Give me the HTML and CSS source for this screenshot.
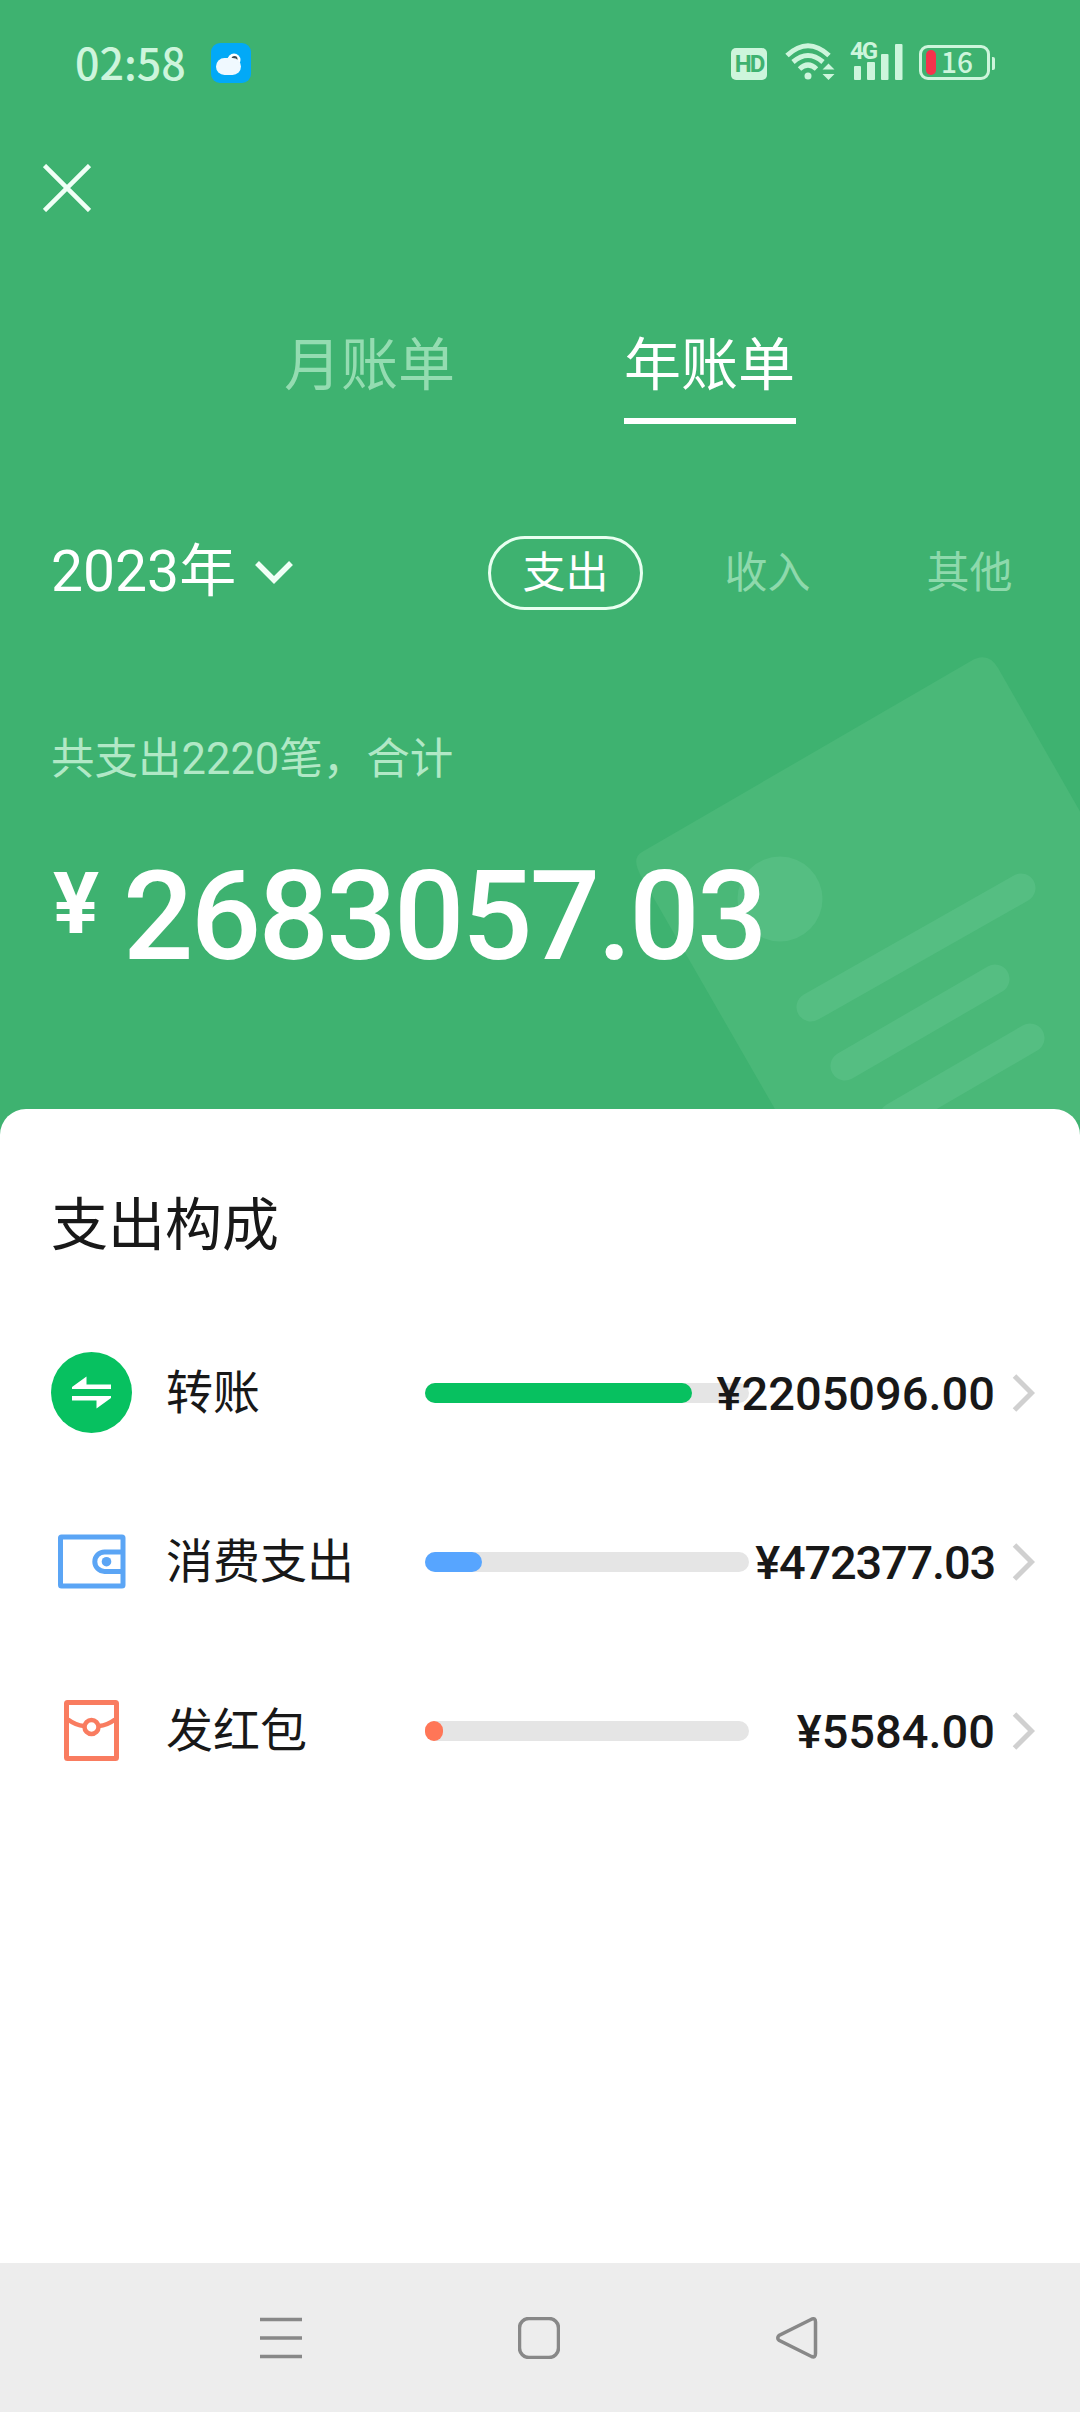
FILE: index.html
```html
<!DOCTYPE html>
<html lang="zh-CN">
<head>
    <meta charset="UTF-8">
    <meta name="viewport" content="width=device-width, initial-scale=1.0">
    <title>年账单</title>
    <link rel="stylesheet" href="styles.css">
</head>
<body>
    <header class="hero">
        <svg class="hero-card" width="480" height="480" viewBox="600 640 480 480">
            <path class="card-bg" d="M971 661 Q988 651 998 668 L1090 829 V1130 H787 L641 876 Q631 858 642 852 Z"/>
            <circle class="card-mark" cx="780" cy="899" r="42.5"/>
            <path class="card-line" d="M811 1007 L1021 888 M845 1066 L995 979 M894 1117 L1030 1038"/>
        </svg>

        <div class="status-bar">
            <span class="time">02:58</span>
            <svg class="weather" width="40" height="40" viewBox="0 0 40 40">
                <rect width="40" height="40" rx="9" fill="#02a9f7"/>
                <circle cx="23" cy="17" r="6.5" fill="#fff"/>
                <circle cx="23.5" cy="16" r="3" fill="#3d4a50"/>
                <rect x="5" y="15" width="25" height="17" rx="8.5" fill="#f0f9ff"/>
            </svg>
            <div class="status-icons">
                <span class="hd">HD</span>
                <svg class="wifi" width="50" height="40" viewBox="0 0 50 40" fill="none" stroke="#cdf5dc" stroke-width="5">
                    <path d="M2 14.5 Q23 -5 44 14.5"/>
                    <path d="M8 21 Q23 8 38 21"/>
                    <path d="M14.500 28 Q23 20 31.500 28"/>
                    <circle cx="23" cy="35" r="3.5" fill="#cdf5dc" stroke="none"/>
                    <path d="M37.500 28.500 L43.500 22.500 L49.500 28.500 Z M37.500 33 L43.500 39 L49.500 33 Z" fill="#cdf5dc" stroke="none"/>
                </svg>
                <div class="signal">
                    <span class="net">4G</span>
                    <svg width="49" height="36" viewBox="0 0 49 36" fill="#cdf5dc">
                        <rect x="0" y="22" width="7" height="14" rx="1"/>
                        <rect x="13" y="18" width="8" height="18" rx="1"/>
                        <rect x="27" y="10" width="7.500" height="26" rx="1"/>
                        <rect x="41" y="0" width="7.500" height="36" rx="1"/>
                    </svg>
                </div>
                <div class="battery"><span class="level"></span><span class="percent">16</span></div>
                <span class="battery-tip"></span>
            </div>
        </div>

        <svg class="close" width="48" height="48" viewBox="0 0 48 48">
            <path d="M1.500 1.500 L46.500 46.500 M46.500 1.500 L1.500 46.500"/>
        </svg>

        <nav class="tabs">
            <span class="tab">月账单</span>
            <span class="tab active">年账单</span>
        </nav>

        <div class="filters">
            <span class="year">2023年</span>
            <svg class="arrow" width="38" height="24" viewBox="0 0 38 24">
                <path d="M2 2 L19 19 L36 2"/>
            </svg>
            <div class="types">
                <span class="type active">支出</span>
                <span class="type">收入</span>
                <span class="type">其他</span>
            </div>
        </div>

        <p class="summary">共支出2220笔，合计</p>
        <div class="total"><span class="yen">¥</span><span class="num">2683057.03</span></div>
    </header>

    <main class="sheet">
        <h2>支出构成</h2>

        <div class="row">
            <svg class="icon" width="81" height="81" viewBox="0 0 81 81">
                <circle cx="40.500" cy="40.500" r="40.500" fill="#07c160"/>
                <path d="M21 37 V35 L35.500 24.500 V32.500 H60 V37 Z M21 44 H60 V46 L45.500 56.500 V48.500 H21 Z" fill="#fff"/>
            </svg>
            <span class="label">转账</span>
            <div class="bar"><div class="fill green" style="width: 82.5%"></div></div>
            <span class="amount">¥2205096.00</span>
            <svg class="more" width="23" height="38" viewBox="0 0 23 38"><path d="M2.500 2 L19.500 19 L2.500 36"/></svg>
        </div>

        <div class="row">
            <svg class="icon" width="81" height="81" viewBox="0 0 81 81" fill="none" stroke="#5ba5f5" stroke-width="5">
                <rect x="9.500" y="16" width="62.500" height="49" rx="1"/>
                <path d="M71 31 H53.500 A9.700 9.700 0 0 0 53.500 50.400 H71"/>
                <circle cx="55.500" cy="40.700" r="4.800" fill="#5ba5f5" stroke="none"/>
            </svg>
            <span class="label">消费支出</span>
            <div class="bar"><div class="fill blue" style="width: 17.7%"></div></div>
            <span class="amount tight">¥472377.03</span>
            <svg class="more" width="23" height="38" viewBox="0 0 23 38"><path d="M2.500 2 L19.500 19 L2.500 36"/></svg>
        </div>

        <div class="row">
            <svg class="icon" width="81" height="81" viewBox="0 0 81 81" fill="none" stroke="#f97c60" stroke-width="5">
                <rect x="15.500" y="12.500" width="50" height="56" rx="1"/>
                <path d="M17 29.500 Q25 35.500 33 36 M64 29.500 Q56 35.500 48 36" stroke-width="4.500"/>
                <circle cx="40.500" cy="37" r="7" stroke-width="4.500"/>
            </svg>
            <span class="label">发红包</span>
            <div class="bar"><div class="fill red" style="width: 5.6%"></div></div>
            <span class="amount">¥5584.00</span>
            <svg class="more" width="23" height="38" viewBox="0 0 23 38"><path d="M2.500 2 L19.500 19 L2.500 36"/></svg>
        </div>
    </main>

    <footer class="navbar">
        <svg width="42" height="42" viewBox="0 0 42 42"><path d="M0 2.500 H42 M0 21 H42 M0 39.500 H42"/></svg>
        <svg width="42" height="42" viewBox="0 0 42 42"><rect x="1.500" y="1.500" width="39" height="39" rx="9.500"/></svg>
        <svg width="42" height="42" viewBox="0 0 42 42"><path d="M35.500 2.200 L3 18.500 Q0.500 21 3 23.300 L35.500 39.500 Q39.500 41 39.500 36.500 V5 Q39.500 0.500 35.500 2.200 Z"/></svg>
    </footer>
</body>
</html>
```
FILE: styles.css
```css
* {
    box-sizing: border-box;
}
body {
    margin: 0;
    width: 1080px;
    height: 2412px;
    display: flex;
    flex-direction: column;
    background: #3eb270;
    font-family: Roboto, "Noto Sans CJK SC", sans-serif;
    color: #181818;
    overflow: hidden;
}
svg {
    display: block;
    flex: none;
}

/* green header */
.hero {
    position: relative;
    height: 1109px;
    flex: none;
    color: #fff;
}
.hero-card {
    position: absolute;
    right: 0;
    top: 640px;
}
.card-bg {
    fill: #4ab878;
}
.card-mark {
    fill: #55be82;
}
.card-line {
    fill: none;
    stroke: #55be82;
    stroke-width: 29;
    stroke-linecap: round;
}
.status-bar {
    display: flex;
    align-items: center;
    height: 126px;
    padding: 0 85px 0 75px;
    color: #cdf5dc;
}
.time {
    width: 136px;
    padding-bottom: 5px;
    font: 500 43px/60px "Noto Sans CJK SC", sans-serif;
}
.status-icons {
    display: flex;
    align-items: center;
    margin-left: auto;
}
.hd {
    width: 36px;
    height: 32px;
    margin: 2px 18px 0 0;
    border-radius: 5px;
    background: #cdf5dc;
    color: #3eb270;
    font-size: 24px;
    font-weight: 700;
    line-height: 33px;
    letter-spacing: -2px;
    text-align: center;
}
.wifi {
    margin-right: 19px;
    margin-top: -4px;
}
.signal {
    position: relative;
    width: 49px;
    margin: -2px 16px 0 0;
}
.net {
    position: absolute;
    left: -4px;
    top: -5px;
    font-size: 24px;
    font-weight: 700;
    line-height: 24px;
    letter-spacing: -2px;
}
.battery {
    display: flex;
    align-items: center;
    width: 71px;
    height: 35px;
    margin-top: -1px;
    padding-left: 4px;
    border: 3px solid #cdf5dc;
    border-radius: 9px;
}
.level {
    width: 10px;
    height: 25px;
    margin-right: 5px;
    border-radius: 5px;
    background: #f5334b;
}
.percent {
    padding-bottom: 3px;
    font: 500 28px/26px "Noto Sans CJK SC", sans-serif;
}
.battery-tip {
    width: 3px;
    height: 13px;
    margin-left: 2px;
    border-radius: 0 2px 2px 0;
    background: #cdf5dc;
}
.close {
    margin: 38px 0 0 43px;
}
.close path, .arrow path {
    fill: none;
    stroke: #f0fff6;
    stroke-width: 4.5;
}
.arrow path {
    stroke-width: 5.5;
}
.tabs {
    display: flex;
    justify-content: center;
    gap: 168px;
    margin-top: 108px;
}
.tab {
    width: 172px;
    height: 104px;
    padding-top: 4px;
    font-size: 57px;
    line-height: 84px;
    color: #94dcb1;
}
.tab.active {
    border-bottom: 6px solid #fff;
    color: #fff;
}
.filters {
    display: flex;
    align-items: center;
    height: 74px;
    margin-top: 112px;
    padding: 0 33px 0 51px;
}
.year {
    font-size: 57px;
    line-height: 74px;
    padding-bottom: 2px;
}
.arrow {
    margin-left: 19px;
}
.types {
    display: flex;
    gap: 47px;
    margin-left: auto;
}
.type {
    width: 155px;
    height: 74px;
    border: 3px solid transparent;
    border-radius: 37px;
    font-size: 43px;
    line-height: 69px;
    text-align: center;
    color: #8ed9ac;
}
.type.active {
    border-color: #e8fff0;
    color: #fff;
}
.summary {
    margin: 120px 0 0 51px;
    font-size: 43.5px;
    line-height: 60px;
    color: #b1e8c6;
}
.total {
    display: flex;
    margin: 65px 0 0 53px;
    position: relative;
}
.yen {
    width: 70px;
    padding-top: 4px;
    font-size: 86px;
    font-weight: 700;
    line-height: 90px;
}
.num {
    font-size: 124px;
    font-weight: 500;
    line-height: 124px;
    letter-spacing: -2.7px;
}

/* white sheet */
.sheet {
    flex: 1;
    position: relative;
    padding: 75px 45px 0 51px;
    border-radius: 26px 26px 0 0;
    background: #fff;
}
.sheet h2 {
    margin: 0 0 40px;
    font-size: 57px;
    font-weight: 400;
    line-height: 84px;
}
.row {
    display: flex;
    align-items: center;
    height: 169px;
}
.label {
    width: 293px;
    padding-left: 34px;
    font-size: 47px;
    line-height: 70px;
}
.bar {
    flex: none;
    width: 324px;
    height: 20px;
    border-radius: 10px;
    background: #e5e5e5;
}
.fill {
    height: 100%;
    border-radius: 10px;
}
.green {
    background: #07c160;
}
.blue {
    background: #57a5ff;
}
.red {
    background: #ff7657;
}
/* long amounts run back over the bar */
.amount {
    flex: 1;
    min-width: 0;
    display: flex;
    justify-content: flex-end;
    padding-top: 2px;
    font-size: 47px;
    font-weight: 500;
    line-height: 60px;
    white-space: nowrap;
}
.tight {
    letter-spacing: -1.2px;
}
.more {
    margin-left: 17px;
}
.more path {
    fill: none;
    stroke: #d0d0d0;
    stroke-width: 5;
}

/* system buttons */
.navbar {
    display: flex;
    justify-content: center;
    align-items: center;
    gap: 216px;
    height: 149px;
    padding-right: 3px;
    background: #ededed;
}
.navbar svg {
    fill: none;
    stroke: #888;
    stroke-width: 3.5;
}
```
